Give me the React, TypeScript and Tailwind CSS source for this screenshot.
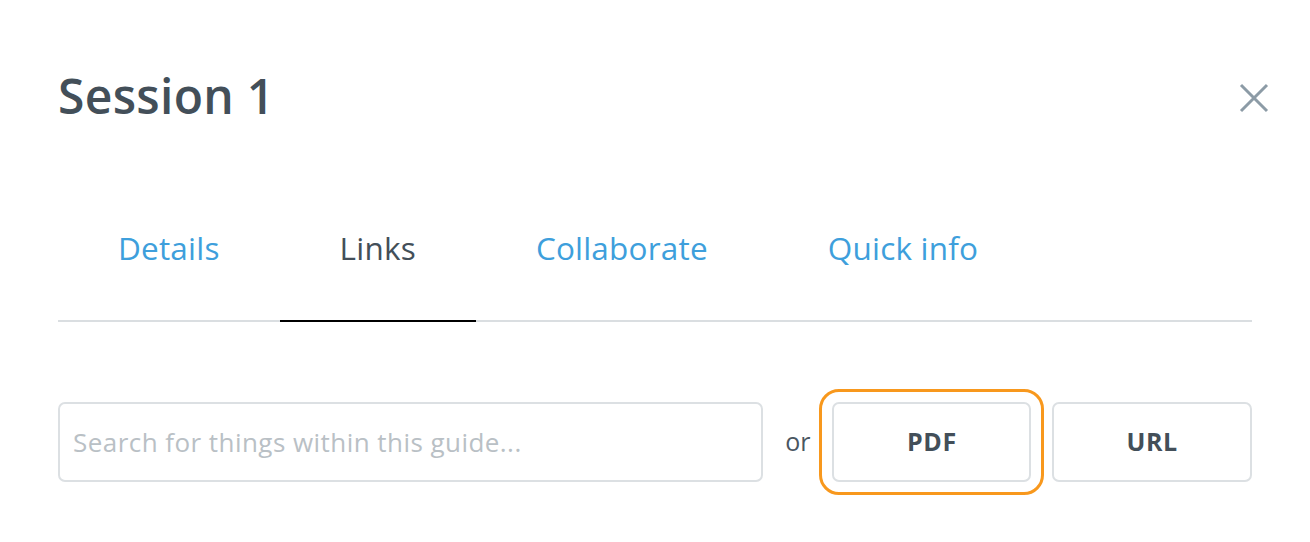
import React from "react";

export default function App() {
  const tabs = [
    { label: "Details", active: false },
    { label: "Links", active: true },
    { label: "Collaborate", active: false },
    { label: "Quick info", active: false },
  ];
  return (
    <div
      className="w-[1310px] h-[542px] bg-white overflow-hidden"
      style={{ fontFamily: '"Open Sans", "Noto Sans", sans-serif' }}
    >
      <div className="flex items-start justify-between pl-[58px] pr-[41px] pt-[66px]">
        <h1 className="text-[48px] leading-[60px] font-semibold text-[#434f59] tracking-[0.3px]">
          Session 1
        </h1>
        <button className="mt-[17px] w-[30px] h-[30px] flex items-center justify-center">
          <svg width="30" height="30" viewBox="0 0 30 30" fill="none">
            <path d="M2 2 L28 28 M28 2 L2 28" stroke="#8c9ba6" strokeWidth="3" />
          </svg>
        </button>
      </div>

      <div className="mx-[58px] mt-[102px] flex border-b-2 border-[#dadee1]">
        {tabs.map((t) => (
          <div
            key={t.label}
            className={
              "px-[60px] pb-[52px] -mb-[2px] border-b-2 text-[31.5px] leading-[40px] tracking-[0.2px] " +
              (t.active
                ? "border-black text-[#434f59]"
                : "border-transparent text-[#3e9fdc]")
            }
          >
            {t.label}
          </div>
        ))}
      </div>

      <div className="mx-[58px] mt-[80px] flex items-center">
        <div className="w-[706px] h-[80px] border-2 border-[#dce0e3] rounded-[7px] flex items-center px-[13px]">
          <span className="text-[26px] tracking-[0.45px] text-[#b9c0c5]">Search for things within this guide...</span>
        </div>
        <span className="ml-[22px] mr-[22px] text-[25px] text-[#4a5661]">or</span>
        <button className="w-[199px] h-[80px] border-2 border-[#dce0e3] rounded-[7px] text-[25px] font-bold tracking-[0.6px] text-[#434f59] outline-[3px] outline-solid outline-offset-[10px] outline-[#f8981d]">
          PDF
        </button>
        <button className="ml-[21px] w-[200px] h-[80px] border-2 border-[#dce0e3] rounded-[7px] text-[25px] font-bold tracking-[0.6px] text-[#434f59]">
          URL
        </button>
      </div>
    </div>
  );
}
